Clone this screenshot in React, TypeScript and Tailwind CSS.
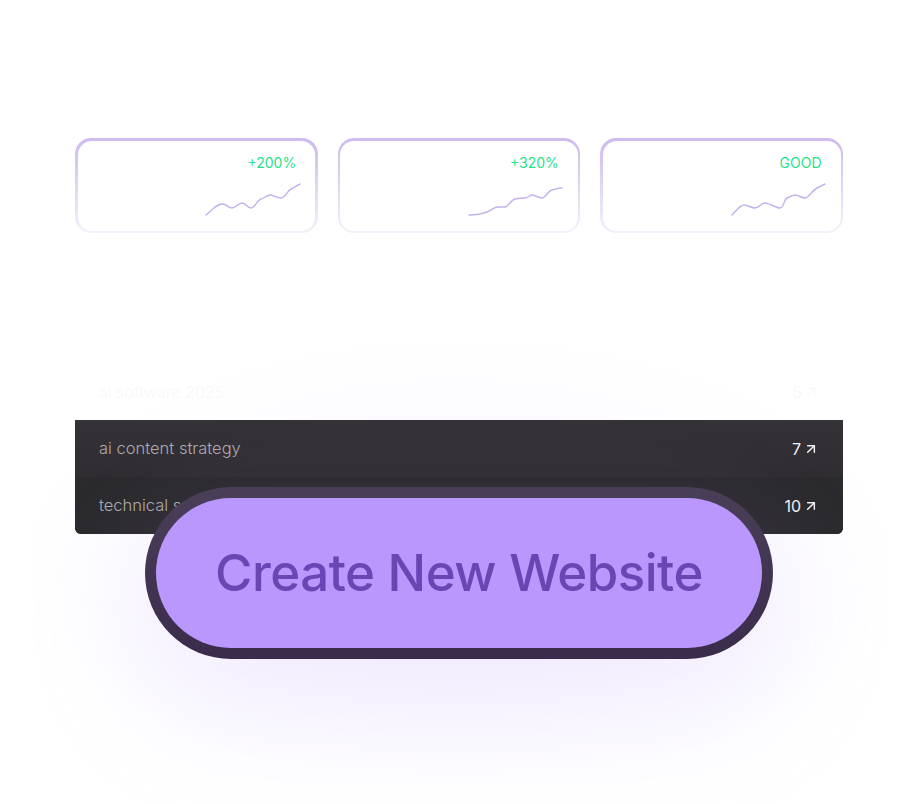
import { ArrowUpRight } from 'lucide-react';

const cards = [
    { label: '+200%', path: 'M1 32 C 9 25, 12 21, 17 21 S 23 25, 27 25 S 33 20, 37 20 S 42 25, 46 25 S 52 17, 56 16 S 62 12, 65 12 S 72 15, 76 15 S 82 8, 86 6 S 93 2, 95 1' },
    { label: '+320%', path: 'M1 32 C 8 32, 14 31, 19 29 S 26 24, 30 24 S 34 24, 37 24 S 43 17, 47 16 S 54 15, 57 15 S 62 12, 64 12 S 71 15, 74 15 S 80 8, 84 7 S 91 5, 94 5' },
    { label: 'GOOD', path: 'M1 32 C 6 27, 9 22, 13 22 S 20 25, 24 25 S 30 20, 34 20 S 45 25, 49 25 S 53 16, 56 15 S 61 12, 64 12 S 71 15, 74 15 S 82 7, 86 5 S 92 2, 94 1' },
];

const rows = [
    { name: 'ai content strategy', value: '7' },
    { name: 'technical seo audit', value: '10' },
];

export default function App() {
    return (
        <div className="min-h-screen w-full bg-white pt-[138px] overflow-hidden" style={{ fontFamily: 'Inter, "Noto Sans", sans-serif' }}>
            <div className="mx-auto w-[768px]">
                {/* metric cards */}
                <div className="grid grid-cols-3 gap-5">
                    {cards.map((c) => (
                        <div key={c.label} className="rounded-2xl bg-gradient-to-b from-[#cdbaf0] to-[#f4f1fa] p-[2.5px]">
                            <div className="flex h-[90px] flex-col items-end rounded-[14px] bg-white pr-[14px] pt-[12px]">
                                <span className="pr-[5px] text-sm leading-5 text-[#1fe38b]">{c.label}</span>
                                <svg width="96" height="34" viewBox="0 0 96 34" fill="none" className="mt-[10px]">
                                    <path d={c.path} stroke="#c2b1ec" strokeWidth="1.4" strokeLinecap="round" />
                                </svg>
                            </div>
                        </div>
                    ))}
                </div>

                {/* keyword list */}
                <div className="relative mt-[130px]">
                    <div className="pointer-events-none absolute -inset-x-12 -top-6 bottom-[-250px] rounded-[220px] bg-[radial-gradient(ellipse_at_center,rgba(196,170,252,0.13),rgba(255,255,255,0)_72%)]" />
                    <div className="relative flex h-[57px] items-center justify-between px-6">
                        <span className="text-base font-light text-[#f8f7fb]">ai software 2025</span>
                        <span className="flex items-center gap-0.5 text-base text-[#f8f7fb]">5<ArrowUpRight size={15} /></span>
                    </div>
                    <div className="relative overflow-hidden rounded-b-md bg-gradient-to-b from-[#353237] to-[#2a292c]">
                        {rows.map((r, i) => (
                            <div key={r.name} className={`flex h-[57px] items-center justify-between px-6 ${i === 1 ? 'bg-[#2b2a2d]' : ''}`}>
                                <span className="text-[16.5px] font-light text-[#aeabb1]">{r.name}</span>
                                <span className="flex items-center gap-0.5 text-base text-[#f1f0f3]">
                                    {r.value}
                                    <ArrowUpRight size={16} strokeWidth={2.2} />
                                </span>
                            </div>
                        ))}
                    </div>
                </div>
            </div>

            {/* call to action */}
            <div className="relative mx-auto -mt-[47px] w-[628px] rounded-full bg-gradient-to-b from-[#4a3f58] to-[#3a2b4b] p-[11px] shadow-[0_50px_110px_20px_rgba(190,160,252,0.14)]">
                <div className="flex h-[150px] items-center justify-center rounded-full bg-[#b997fc]">
                    <span className="text-[51px] font-medium tracking-[-0.5px] text-[#6a45b4]">Create New Website</span>
                </div>
            </div>
        </div>
    );
}
